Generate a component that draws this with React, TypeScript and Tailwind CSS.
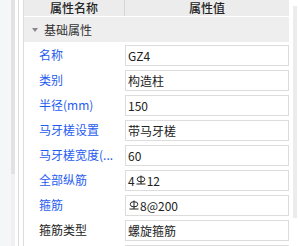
import React from "react";

const Rebar = () => (
  <svg width="10" height="10" viewBox="0 0 10 10" className="inline-block mx-[1px] -mt-[2px]" fill="none" stroke="#222" strokeWidth="1">
    <ellipse cx="5" cy="4.3" rx="3.8" ry="2.6" />
    <line x1="5" y1="0.5" x2="5" y2="9" />
    <line x1="0.5" y1="9" x2="9.5" y2="9" />
  </svg>
);

type Row = { label: string; value: React.ReactNode; blue: boolean };

const rows: Row[] = [
  { label: "名称", value: "GZ4", blue: true },
  { label: "类别", value: "构造柱", blue: true },
  { label: "半径(mm)", value: "150", blue: true },
  { label: "马牙槎设置", value: "带马牙槎", blue: true },
  { label: "马牙槎宽度(...", value: "60", blue: true },
  { label: "全部纵筋", value: <>4<Rebar />12</>, blue: true },
  { label: "箍筋", value: <><Rebar />8@200</>, blue: true },
  { label: "箍筋类型", value: "螺旋箍筋", blue: false },
  { label: "", value: "", blue: false },
];

export default function App() {
  return (
    <div
      className="flex h-[246px] w-[298px] overflow-hidden bg-white text-[12px] leading-none"
      style={{ fontFamily: '"Noto Sans CJK SC", "Microsoft YaHei", sans-serif' }}
    >
      <div className="w-[11px] bg-[#f5f6f8]" />
      <div className="w-[4px] bg-[#f0f0f0]">
        <div className="h-[174px] bg-[#e2e2e2]" />
      </div>
      <div className="w-[3px] bg-white" />
      <div className="w-px bg-[#dcdcdc]" />
      <div className="w-[4px] bg-white" />
      <div className="w-px bg-[#dcdcdc]" />
      <div className="flex w-[265px] flex-col">
        <div className="flex h-[16px] shrink-0 bg-[#ececec] font-medium text-[#222]">
          <div className="flex w-[100px] items-center justify-center pb-[1px]">属性名称</div>
          <div className="w-px bg-[#d6d6d6]" />
          <div className="flex flex-1 items-center justify-center pb-[1px]">属性值</div>
        </div>
        <div className="h-px shrink-0 bg-white" />
        <div className="flex h-[25px] shrink-0 items-center bg-[#eeeeee] text-[#333]">
          <svg width="6" height="4" viewBox="0 0 6 4" className="ml-[8px] mr-[6px]">
            <polygon points="0,0 6,0 3,4" fill="#888" />
          </svg>
          <span>基础属性</span>
        </div>
        {rows.map((r, i) => (
          <div key={i} className="flex h-[25px] shrink-0">
            <div
              className={`w-[101px] shrink-0 overflow-hidden whitespace-nowrap pl-[15px] pr-[2px] leading-[25px] ${r.blue ? "text-[#1f5cf0]" : "text-[#222]"}`}
            >
              {r.label}
            </div>
            <div className="flex-1 pt-[3px]">
              <div className="flex h-[21px] items-center border border-[#dcdcdc] pl-[2px] text-[#222]">
                <span className="flex items-center">{r.value}</span>
              </div>
            </div>
          </div>
        ))}
      </div>
      <div className="w-[4px] bg-white" />
      <div className="w-[4px] bg-white pt-[6px]">
        <div className="h-[212px] bg-[#ececec]" />
      </div>
    </div>
  );
}
